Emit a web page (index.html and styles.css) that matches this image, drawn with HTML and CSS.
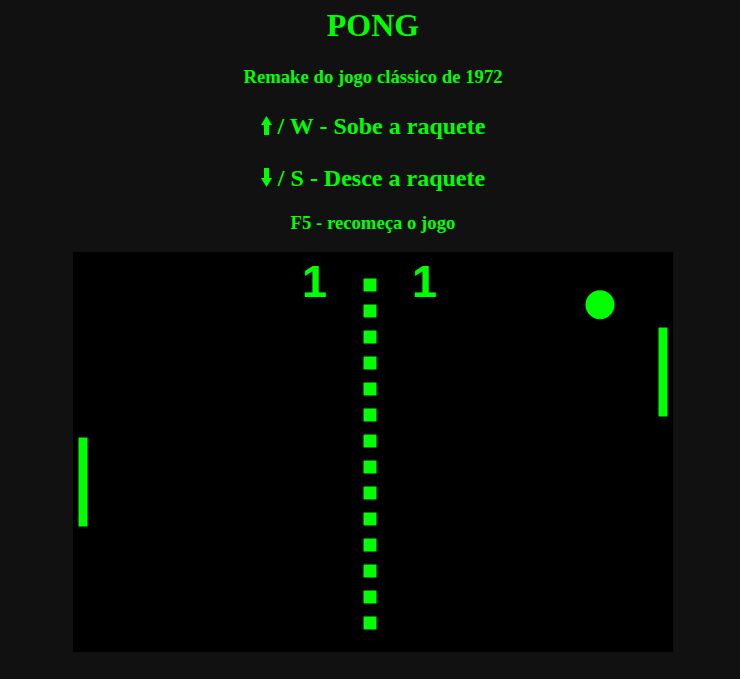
FILE: index.html
```html
<!DOCTYPE html>
<html lang="pt">
<head>
<meta charset="utf-8">
<title>PONG</title>
<link rel="stylesheet" href="styles.css">
</head>
<body>
<h1 class="title">PONG</h1>
<h3 class="sub sub-first">Remake do jogo clássico de 1972</h3>
<h2 class="key key-first"><svg class="arrow" viewBox="0 0 11 19" width="11" height="19" aria-hidden="true"><polygon points="5.5,0 11,9 8,9 8,19 3,19 3,9 0,9"/></svg> / W - Sobe a raquete</h2>
<h2 class="key key-second"><svg class="arrow" viewBox="0 0 11 19" width="11" height="19" aria-hidden="true"><polygon points="3,0 8,0 8,10 11,10 5.5,19 0,10 3,10"/></svg> / S - Desce a raquete</h2>
<h3 class="sub sub-last">F5 - recomeça o jogo</h3>
<svg class="board" width="600" height="400" viewBox="0 0 600 400">
  <rect class="bg" x="0" y="0" width="600" height="400"/>
  <g class="net">
    <rect x="290.5" y="26.5" width="13" height="13"/>
    <rect x="290.5" y="52.5" width="13" height="13"/>
    <rect x="290.5" y="78.5" width="13" height="13"/>
    <rect x="290.5" y="104.5" width="13" height="13"/>
    <rect x="290.5" y="130.5" width="13" height="13"/>
    <rect x="290.5" y="156.5" width="13" height="13"/>
    <rect x="290.5" y="182.5" width="13" height="13"/>
    <rect x="290.5" y="208.5" width="13" height="13"/>
    <rect x="290.5" y="234.5" width="13" height="13"/>
    <rect x="290.5" y="260.5" width="13" height="13"/>
    <rect x="290.5" y="286.5" width="13" height="13"/>
    <rect x="290.5" y="312.5" width="13" height="13"/>
    <rect x="290.5" y="338.5" width="13" height="13"/>
    <rect x="290.5" y="364.5" width="13" height="13"/>
  </g>
  <text class="score" x="229" y="45">1</text>
  <text class="score" x="339" y="45">1</text>
  <rect class="piece" x="5.5" y="185.5" width="9" height="89"/>
  <rect class="piece" x="585.5" y="75.5" width="9" height="89"/>
  <circle class="piece" cx="527" cy="52.8" r="14.5"/>
</svg>
</body>
</html>
```

FILE: styles.css
```css
html {
  background: #111111;
}
body {
  margin: 0;
  padding: 7px 0 27px 6px;
  background: #111111;
  color: #00ff00;
  font-family: "Liberation Serif", "Times New Roman", serif;
  font-weight: bold;
  text-align: center;
}
.title {
  margin: 0;
  font-size: 32px;
  line-height: 36px;
}
.sub {
  margin: 0;
  font-size: 18.72px;
  line-height: 22px;
}
.sub-first {
  margin-top: 22.7px;
}
.sub-last {
  margin-top: 19.8px;
}
.key {
  margin: 0;
  font-size: 24px;
  line-height: 28px;
}
.key-first {
  margin-top: 24.2px;
}
.key-second {
  margin-top: 24px;
}
.arrow {
  display: inline-block;
  vertical-align: -1px;
  fill: #00ff00;
}
.board {
  display: block;
  margin: 18.3px auto 0;
}
.bg {
  fill: #000000;
}
.net rect,
.piece {
  fill: #00ff00;
}
.score {
  fill: #00ff00;
  font-family: "Liberation Sans", Arial, sans-serif;
  font-weight: bold;
  font-size: 45px;
}
```
